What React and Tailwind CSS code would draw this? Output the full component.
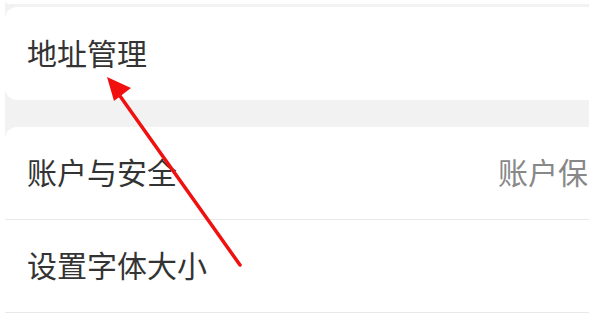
import React from "react";

const Row = ({ title, extra, divider = true }) => (
  <div className={`flex h-[93px] items-center justify-between pl-[22px] ${divider ? "border-b border-[#e8e8e8]" : ""}`}>
    <span className="text-[30px] leading-none text-[#333]">{title}</span>
    {extra && <span className="-mr-[29px] whitespace-nowrap text-[30px] leading-none text-[#888]">{extra}</span>}
  </div>
);

export default function App() {
  return (
    <div
      className="relative h-[316px] w-[600px] overflow-hidden bg-white"
      style={{ fontFamily: '"Noto Sans", "Noto Sans CJK SC", sans-serif' }}
    >
      <div className="ml-[5px] w-[584px] overflow-hidden bg-[#f2f2f2]">
        <div className="h-[4px] rounded-bl-xl bg-white" />
        <div className="mt-[3px] rounded-l-xl bg-white">
          <Row title="地址管理" divider={false} />
        </div>
        <div className="h-[27px]" />
        <div className="rounded-tl-xl bg-white">
          <Row title="账户与安全" extra="账户保护" />
          <Row title="设置字体大小" />
        </div>
      </div>

      <svg className="pointer-events-none absolute left-0 top-0" width="600" height="316" viewBox="0 0 600 316">
        <line x1="240" y1="265" x2="120" y2="96" stroke="#f01010" strokeWidth="3.5" strokeLinecap="round" />
        <polygon points="107,77 131,88 114,101" fill="#f01010" />
      </svg>
    </div>
  );
}
